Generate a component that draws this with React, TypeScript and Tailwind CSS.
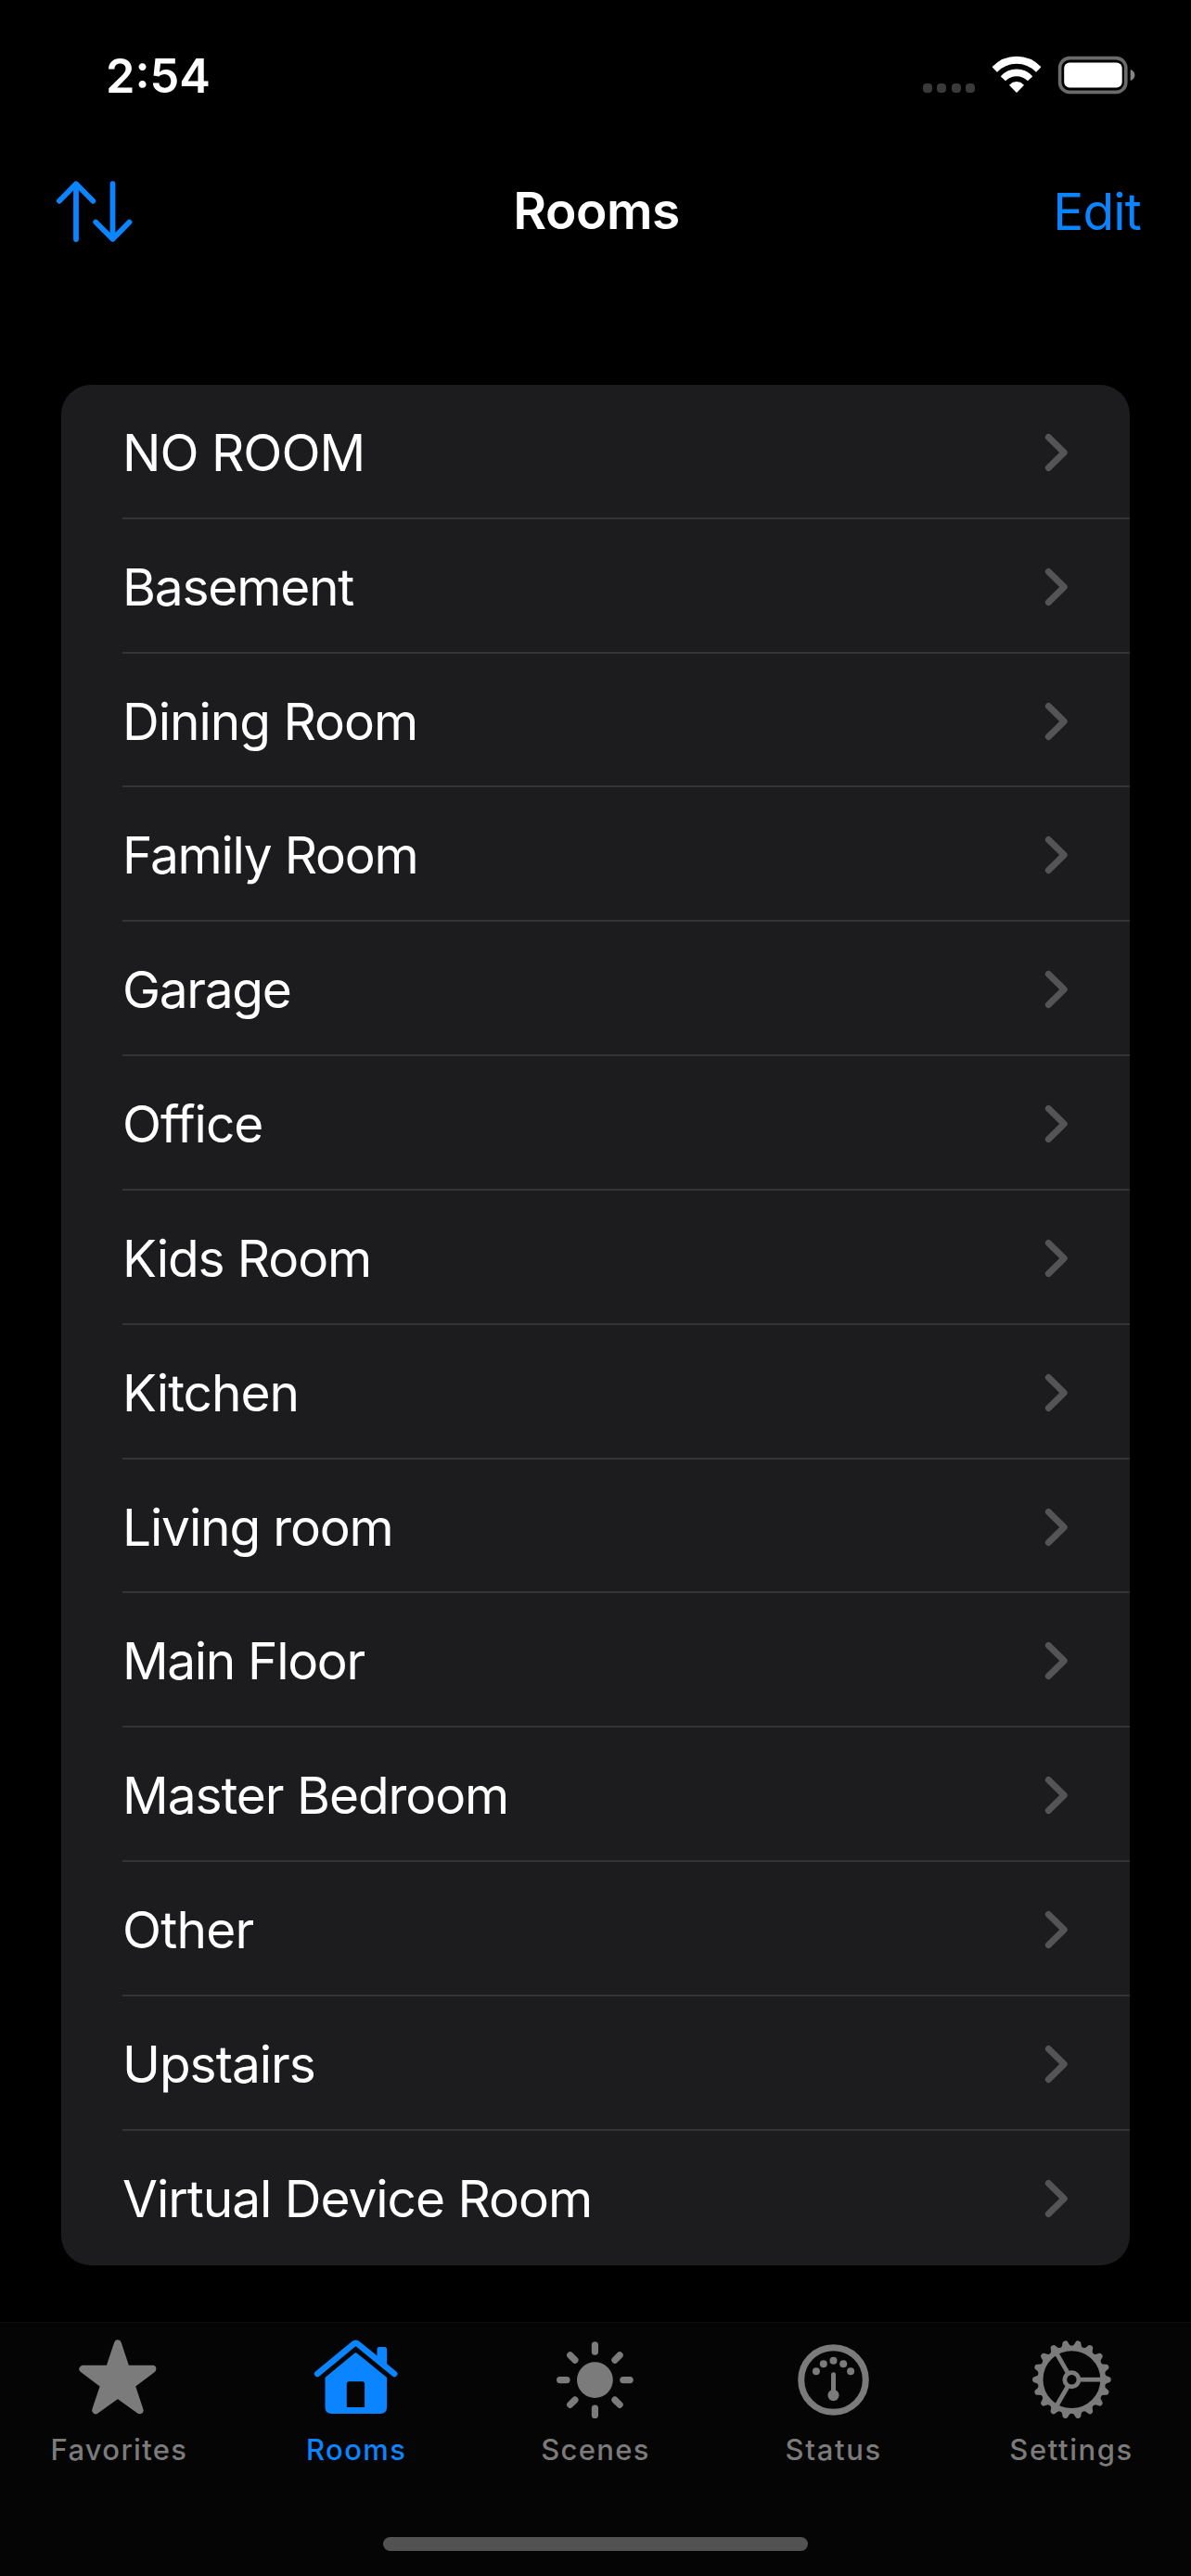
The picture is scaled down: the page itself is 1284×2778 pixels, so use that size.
import type { ReactNode } from "react";

const rooms: { name: string; tracking: string }[] = [
  { name: "NO ROOM", tracking: "tracking-[-1px]" },
  { name: "Basement", tracking: "tracking-[-1.2px]" },
  { name: "Dining Room", tracking: "tracking-[-1px]" },
  { name: "Family Room", tracking: "tracking-[-1.25px]" },
  { name: "Garage", tracking: "tracking-[-1.3px]" },
  { name: "Office", tracking: "tracking-[-1px]" },
  { name: "Kids Room", tracking: "tracking-[-1.1px]" },
  { name: "Kitchen", tracking: "tracking-[-1px]" },
  { name: "Living room", tracking: "tracking-[-1.15px]" },
  { name: "Main Floor", tracking: "tracking-[-1.35px]" },
  { name: "Master Bedroom", tracking: "tracking-[-1.05px]" },
  { name: "Other", tracking: "tracking-[-0.8px]" },
  { name: "Upstairs", tracking: "tracking-[-1px]" },
  { name: "Virtual Device Room", tracking: "tracking-[-1.03px]" },
];

function StatusBar() {
  return (
    <div className="flex h-[164px] items-start justify-between pl-[114px] pr-[60px]">
      <span className="mt-[52px] text-[50.5px] leading-[60px] font-semibold">2:54</span>
      <div className="mt-[60px] flex h-[42px] items-start">
        <div className="mt-[30px] flex gap-[5.3px]">
          {[0, 1, 2, 3].map((i) => (
            <span key={i} className="size-[10px] rounded-[4px] bg-[#3a3a3a]" />
          ))}
        </div>
        <svg className="ml-[17px] h-[42px] w-[56px]" viewBox="1068.3 60 56 42" fill="#fff" stroke="#fff" strokeWidth="1.6" strokeLinejoin="round">
          <path d="M1070.9 72.3A35.2 35.2 0 0 1 1121.7 72.3L1117.3 76.8A29.3 29.3 0 0 0 1075.3 76.8Z" />
          <path d="M1080.2 82.3A21.9 21.9 0 0 1 1112.4 82.3L1108.2 86.2A17 17 0 0 0 1084.4 86.2Z" />
          <path d="M1089.3 91.7A10 10 0 0 1 1103.3 91.7L1096.3 99Z" />
        </svg>
        <svg className="ml-[16px] h-[42px] w-[84px]" viewBox="1140.3 60 84 42">
          <rect x="1142.9" y="62.6" width="71.2" height="36.8" rx="10.5" fill="none" stroke="#6b6b6b" strokeWidth="3.6" />
          <rect x="1147.5" y="67.6" width="62.5" height="26.8" rx="6" fill="#fff" />
          <path d="M1219 75C1225.3 77 1225.3 85 1219 87Z" fill="#858585" />
        </svg>
      </div>
    </div>
  );
}

function NavBar() {
  return (
    <div className="grid h-[251px] grid-cols-[1fr_auto_1fr] items-start text-[55px] leading-[66px]">
      <button className="mt-[30px] ml-[60px] w-[84px]">
        <svg className="block h-[68px] w-[84px]" viewBox="60 194 84 68" fill="none" stroke="#0a84ff" strokeWidth="5.8" strokeLinecap="round" strokeLinejoin="round">
          <path d="M82 258V198.3M63.9 216.8L82 198.3L100.3 216.8" />
          <path d="M121.5 198.2V257.8M103.2 239.5L121.5 257.8L139.5 239.5" />
        </svg>
      </button>
      <h1 className="mt-[30px] pl-[2px] font-semibold tracking-[-0.45px]">Rooms</h1>
      <button className="mt-[31px] mr-[54px] justify-self-end tracking-[-0.8px] text-[#0a84ff]">Edit</button>
    </div>
  );
}

function Chevron() {
  return (
    <svg className="mt-[3px] mr-[66px] h-[42px] w-[26px]" viewBox="0 0 26 42" fill="none" stroke="#545456" strokeWidth="7" strokeLinecap="round" strokeLinejoin="round">
      <path d="M4.4 4.4L21.2 21L4.4 37.6" />
    </svg>
  );
}

function StarIcon() {
  return (
    <path
      d="M43.9 6.4L53 33.8H81.4L58.5 51L67.6 78.2L43.9 61.2L20.2 78.2L29.3 51L6.4 33.8H34.8Z"
      strokeWidth="8"
      strokeLinejoin="round"
    />
  );
}

function HouseIcon() {
  return (
    <>
      <path d="M2.2 39L41 7Q43.5 5 46 7L85.2 39" fill="none" strokeWidth="6.6" strokeLinecap="round" strokeLinejoin="round" />
      <path d="M66.5 22V12.5Q66.5 10 69 10H74.6Q77.1 10 77.1 12.5V31Z" stroke="none" />
      <path
        d="M41.6 17.2Q43.5 15.4 45.4 17.2L77.1 43V75Q77.1 82 70 82H17.6Q10.5 82 10.5 75V43ZM36.3 47.3Q33.8 47.3 33.8 49.8V75H53.1V49.8Q53.1 47.3 50.6 47.3Z"
        fillRule="evenodd"
        stroke="none"
      />
    </>
  );
}

function SunIcon() {
  return (
    <g transform="translate(44.4 45.6)">
      <circle r="19.4" stroke="none" />
      {[0, 45, 90, 135, 180, 225, 270, 315].map((a) => (
        <path key={a} d="M30.4 0H37.8" transform={`rotate(${a})`} strokeWidth="7.2" strokeLinecap="round" />
      ))}
    </g>
  );
}

function GaugeIcon() {
  return (
    <g transform="translate(44.5 45.5)">
      <circle r="34.8" fill="none" strokeWidth="7" />
      <g stroke="none">
        <circle cx="-18.6" cy="-9.3" r="4" />
        <circle cx="-10.7" cy="-17.3" r="4" />
        <circle cx="0" cy="-20.7" r="4" />
        <circle cx="10.7" cy="-17.3" r="4" />
        <circle cx="18.6" cy="-9.3" r="4" />
        <circle cx="0" cy="16.6" r="6.1" />
      </g>
      <path d="M0 -5.8V14" strokeWidth="5" strokeLinecap="round" />
    </g>
  );
}

function GearIcon() {
  const teeth = Array.from({ length: 18 }, (_, i) => i * 20);
  return (
    <g transform="translate(44.4 45.2)">
      <circle r="33.8" fill="none" strokeWidth="5.8" />
      <circle r="7.6" fill="none" strokeWidth="4.8" />
      {[0, 120, 240].map((a) => (
        <path key={a} d="M9 0H33" transform={`rotate(${a})`} strokeWidth="4.8" />
      ))}
      {teeth.map((a) => (
        <path key={a} d="M35 -5.8Q37.5 -3.6 41 -2.7Q42.4 -2.2 42.4 0Q42.4 2.2 41 2.7Q37.5 3.6 35 5.8Z" transform={`rotate(${a})`} stroke="none" />
      ))}
    </g>
  );
}

const tabs: { label: string; tracking: string; icon: ReactNode; active?: boolean }[] = [
  { label: "Favorites", tracking: "tracking-[1.3px]", icon: <StarIcon /> },
  { label: "Rooms", tracking: "tracking-[1.4px] mr-[2px]", icon: <HouseIcon />, active: true },
  { label: "Scenes", tracking: "tracking-[1.3px]", icon: <SunIcon /> },
  { label: "Status", tracking: "tracking-[1.7px]", icon: <GaugeIcon /> },
  { label: "Settings", tracking: "tracking-[1.6px] mr-[1px]", icon: <GearIcon /> },
];

function TabBar() {
  return (
    <nav className="flex h-[274px] flex-col items-center border-t border-[#0c0c0c] bg-[#050505]">
      <div className="grid w-full grid-cols-5 pt-[16px]">
        {tabs.map((tab) => (
          <button key={tab.label} className={tab.active ? "flex flex-col items-center text-[#0a84ff]" : "flex flex-col items-center text-[#7b7b7b]"}>
            <svg className="h-[90px] w-[90px] overflow-visible" viewBox="0 0 90 90" fill="currentColor" stroke="currentColor">
              {tab.icon}
            </svg>
            <span className={`mt-[12px] text-[31px] leading-[37px] font-medium ${tab.tracking}`}>{tab.label}</span>
          </button>
        ))}
      </div>
      <div className="mt-[76px] h-[15px] w-[458px] rounded-full bg-[#525252]" />
    </nav>
  );
}

export default function App() {
  return (
    <div className="flex h-[2778px] w-[1284px] flex-col overflow-hidden bg-black font-['Inter',sans-serif] text-white antialiased">
      <StatusBar />
      <NavBar />
      <main className="flex-1 px-[66px]">
        <ul className="overflow-hidden rounded-[32px] bg-[#1c1c1e]">
          {rooms.map((room, i) => (
            <li key={room.name} className="h-[144.84px] pl-[66px]">
              <div className={`flex h-full items-center justify-between border-b-2 ${i < rooms.length - 1 ? "border-[#343437]" : "border-transparent"}`}>
                <span className={`mt-[3px] text-[55px] leading-[66px] whitespace-nowrap ${room.tracking}`}>{room.name}</span>
                <Chevron />
              </div>
            </li>
          ))}
        </ul>
      </main>
      <TabBar />
    </div>
  );
}
